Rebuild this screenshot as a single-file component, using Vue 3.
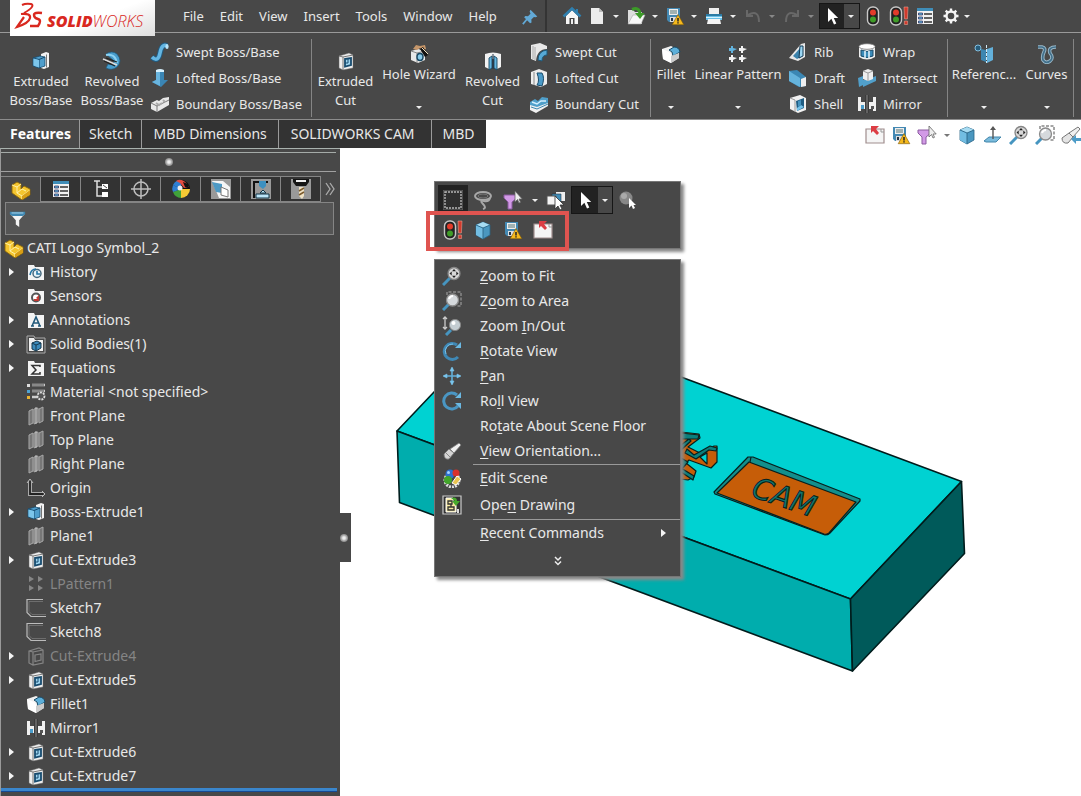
<script setup>
const menus = ['File', 'Edit', 'View', 'Insert', 'Tools', 'Window', 'Help']

const quick = [
  { icon: 'new', label: 'New' },
  { icon: 'open', label: 'Open' },
  { icon: 'save', label: 'Save' },
  { icon: 'print', label: 'Print' },
  { icon: 'undo', label: 'Undo', off: true },
  { icon: 'redo', label: 'Redo', off: true },
  { icon: 'cursor', label: 'Select', active: true }
]

const status = [
  { icon: 'traffic', label: 'Rebuild' },
  { icon: 'trafficbang', label: 'Rebuild all' },
  { icon: 'props', label: 'File properties' },
  { icon: 'gear', label: 'Options' }
]

const ribbon = [
  {
    items: [
      { kind: 'big', icon: 'extrude', lines: ['Extruded', 'Boss/Base'], size: 'w72' },
      { kind: 'big', icon: 'revolve', lines: ['Revolved', 'Boss/Base'], size: 'w70' },
      {
        kind: 'stack', size: 'w161', rows: [
          { icon: 'sweep', label: 'Swept Boss/Base' },
          { icon: 'loft', label: 'Lofted Boss/Base' },
          { icon: 'boundary', label: 'Boundary Boss/Base' }
        ]
      }
    ]
  },
  {
    items: [
      { kind: 'big', icon: 'cut', lines: ['Extruded', 'Cut'], size: 'w67' },
      { kind: 'drop', icon: 'hole', lines: ['Hole Wizard'], size: 'w80' },
      { kind: 'big', icon: 'revcut', lines: ['Revolved', 'Cut'], size: 'w67' },
      {
        kind: 'stack', size: 'w121', rows: [
          { icon: 'sweepcut', label: 'Swept Cut' },
          { icon: 'loftcut', label: 'Lofted Cut' },
          { icon: 'boundcut', label: 'Boundary Cut' }
        ]
      }
    ]
  },
  {
    items: [
      { kind: 'drop', icon: 'fillet', lines: ['Fillet'], size: 'w40' },
      { kind: 'drop', icon: 'pattern', lines: ['Linear Pattern'], size: 'w94' },
      {
        kind: 'stack', size: 'w66', rows: [
          { icon: 'rib', label: 'Rib' },
          { icon: 'draft', label: 'Draft' },
          { icon: 'shell', label: 'Shell' }
        ]
      },
      {
        kind: 'stack', size: 'w90', rows: [
          { icon: 'wrap', label: 'Wrap' },
          { icon: 'intersect', label: 'Intersect' },
          { icon: 'mirror', label: 'Mirror' }
        ]
      }
    ]
  },
  {
    items: [
      { kind: 'drop', icon: 'refgeo', lines: ['Referenc...'], size: 'w72' },
      { kind: 'drop', icon: 'curves', lines: ['Curves'], size: 'w53' }
    ]
  }
]

const tabs = ['Features', 'Sketch', 'MBD Dimensions', 'SOLIDWORKS CAM', 'MBD']

const headsUp = [
  { icon: 'exitbox', label: 'Previous view' },
  { icon: 'save', label: 'Save' },
  { icon: 'funnelpick', label: 'Selection filter', arrow: true },
  { icon: 'cube', label: 'Isometric' },
  { icon: 'normal', label: 'Normal to' },
  { icon: 'zoomfit', label: 'Zoom to fit' },
  { icon: 'zoomarea', label: 'Zoom to area' },
  { icon: 'torchback', label: 'View orientation' }
]

const panelTabs = ['part', 'props', 'config', 'target', 'ball', 'sheets', 'press', 'drill']

const tree = [
  { icon: 'fhistory', label: 'History', open: true },
  { icon: 'fsensor', label: 'Sensors' },
  { icon: 'fannot', label: 'Annotations', open: true },
  { icon: 'fsolid', label: 'Solid Bodies(1)', open: true },
  { icon: 'fequation', label: 'Equations', open: true },
  { icon: 'material', label: 'Material <not specified>' },
  { icon: 'plane', label: 'Front Plane' },
  { icon: 'plane', label: 'Top Plane' },
  { icon: 'plane', label: 'Right Plane' },
  { icon: 'origin', label: 'Origin' },
  { icon: 'extrude', label: 'Boss-Extrude1', open: true },
  { icon: 'plane', label: 'Plane1' },
  { icon: 'cut', label: 'Cut-Extrude3', open: true },
  { icon: 'patternoff', label: 'LPattern1', off: true },
  { icon: 'sketch', label: 'Sketch7' },
  { icon: 'sketch', label: 'Sketch8' },
  { icon: 'cutoff', label: 'Cut-Extrude4', open: true, off: true },
  { icon: 'cut', label: 'Cut-Extrude5', open: true },
  { icon: 'fillet', label: 'Fillet1' },
  { icon: 'mirror', label: 'Mirror1' },
  { icon: 'cut', label: 'Cut-Extrude6', open: true },
  { icon: 'cut', label: 'Cut-Extrude7', open: true }
]

const viewItems = [
  { icon: 'zoomfit', text: ['', 'Z', 'oom to Fit'] },
  { icon: 'zoomarea', text: ['Z', 'o', 'om to Area'] },
  { icon: 'zoominout', text: ['Zoom ', 'I', 'n/Out'] },
  { icon: 'rotate', text: ['', 'R', 'otate View'] },
  { icon: 'pan', text: ['', 'P', 'an'] },
  { icon: 'roll', text: ['Ro', 'l', 'l View'] },
  { icon: '', text: ['Ro', 't', 'ate About Scene Floor'] },
  { icon: 'torch', text: ['', 'V', 'iew Orientation...'] }
]
const sceneItems = [
  { icon: 'scene', text: ['', 'E', 'dit Scene'] },
  { icon: 'drawing', text: ['Ope', 'n', ' Drawing'] }
]
</script>

<template>
  <svg class="defs" aria-hidden="true">
    <symbol id="home" viewBox="0 0 20 20"><path d="M4 10v8h12v-8l-6-6z" fill="#f6f6f6"/><path d="M7.500 18v-6h5v6z" fill="#444"/><path d="M9 18v-5h2v5z" fill="#eee"/><path d="M1.500 10.500L10 2.500l8.500 8" fill="none" stroke="#2f7fae" stroke-width="2.600"/><path d="M14 3h2v4h-2z" fill="#2f7fae"/></symbol>
    <symbol id="new" viewBox="0 0 20 20"><path d="M4 2h8l4 4v12H4z" fill="#ececec"/><path d="M12 2v4h4z" fill="#bbb"/></symbol>
    <symbol id="open" viewBox="0 0 20 20"><path d="M2 4h5l2 2h7v12H2z" fill="#ddd"/><path d="M7 9h12l-4 9H2z" fill="#f8f8f8" stroke="#aaa" stroke-width=".6"/><path d="M6 3.500q7-3 8 4" fill="none" stroke="#3c9a28" stroke-width="3"/><path d="M9 7h9.500L14 13z" fill="#3c9a28"/></symbol>
    <symbol id="save" viewBox="0 0 20 20"><path d="M2 2h13v14H4l-2-2z" fill="#4489b3"/><path d="M4 3h9v6H4z" fill="#eee"/><path d="M5 5h7M5 7h7" stroke="#577"/><path d="M5 11h7v5H5z" fill="#ddd"/><path d="M6 12h2v3H6z" fill="#234"/><path d="M13 8.500l5.800 10.200H7.200z" fill="#f6b91c" stroke="#7a5708" stroke-width=".6"/><path d="M13 12v3.400M13 16.300v1.300" stroke="#222" stroke-width="1.500"/></symbol>
    <symbol id="print" viewBox="0 0 20 20"><path d="M5 2h10v6H5z" fill="#f0f0f0"/><path d="M2 8h16v6H2z" fill="#68bfe6"/><path d="M2 8h16v2H2z" fill="#2c7ba5"/><path d="M4 13h12l1 5H3z" fill="#f4f4f4"/><path d="M2 11.500h16" stroke="#d5f2ff"/></symbol>
    <symbol id="undo" viewBox="0 0 20 20"><path d="M4 4v6h6M5 9q11-6 11 7" fill="none" stroke="#686868" stroke-width="2"/></symbol>
    <symbol id="redo" viewBox="0 0 20 20"><path d="M16 4v6h-6M15 9q-11-6-11 7" fill="none" stroke="#686868" stroke-width="2"/></symbol>
    <symbol id="cursor" viewBox="0 0 20 20"><path d="M6 2v14l3.400-3.200L12 18.500l2.300-1L11.800 12h4.400z" fill="#fff"/></symbol>
    <symbol id="traffic" viewBox="0 0 20 20"><rect x="4.500" y="1" width="11" height="18" rx="5" fill="#222" stroke="#c8c8c8" stroke-width="1.400"/><circle cx="10" cy="6.500" r="3" fill="#e33b2a"/><circle cx="10" cy="13.500" r="3" fill="#3f9c28"/></symbol>
    <symbol id="trafficbang" viewBox="0 0 20 20"><rect x="1.500" y="1" width="11" height="18" rx="5" fill="#222" stroke="#c8c8c8" stroke-width="1.400"/><circle cx="7" cy="6.500" r="3" fill="#e33b2a"/><circle cx="7" cy="13.500" r="3" fill="#3f9c28"/><path d="M15 1h4l-.6 12h-2.800zM15.400 15h3.200v3.500h-3.200z" fill="#d23a2c" stroke="#f0b0a0" stroke-width=".5"/></symbol>
    <symbol id="props" viewBox="0 0 20 20"><path d="M2 2h16v16H2z" fill="#f2f2f2"/><path d="M2 2h16v3H2z" fill="#3f8db8"/><path d="M3.500 7h4v2h-4zM3.500 11h4v2h-4zM3.500 15h4v2h-4z" fill="#68b7e0" stroke="#225" stroke-width=".7"/><path d="M9 8h8M9 12h8M9 16h8" stroke="#333" stroke-width="1.300"/></symbol>
    <symbol id="gear" viewBox="0 0 20 20"><circle cx="10" cy="10" r="4.500" fill="none" stroke="#f5f5f5" stroke-width="2.400"/><path d="M10 2.500v3M10 14.500v3M2.500 10h3M14.500 10h3M4.700 4.700l2 2M13.300 13.300l2 2M15.300 4.700l-2 2M6.700 13.300l-2 2" stroke="#f5f5f5" stroke-width="2.400"/></symbol>
    <symbol id="pin" viewBox="0 0 20 20"><path d="M10 2l8 8-2 1-2-.5-3 3 .2 3.500-1.700 1-7-7L4 9.500l3 .2 3-3L9 4z" fill="#62a9d6"/><path d="M6 13l-5 6" stroke="#62a9d6" stroke-width="2"/></symbol>

    <symbol id="extrude" viewBox="0 0 20 20"><path d="M10 3l5-2 3 1v14l-5 2-3-1z" fill="#f2f2f2"/><path d="M15.500 3.500v13" stroke="#777"/><path d="M2 7l7-2 5 1v9l-6 2-6-2z" fill="#4f9ecc" stroke="#174b6e" stroke-width=".8"/><path d="M2 7l6 1.500L14 6M8 8.500V17" fill="none" stroke="#174b6e"/><path d="M2.500 7.500L8 9v7.500l-5.500-2z" fill="#7cc5ea"/></symbol>
    <symbol id="revolve" viewBox="0 0 20 20"><path d="M4 3q6-4 11 0q6 7 0 13q-5 4-11 1l2-4q6 2 6-3z" fill="#489dcd" stroke="#1e597c" stroke-width=".7"/><path d="M4 4q9-2 11 8" fill="none" stroke="#8cd2f2" stroke-width="2"/><path d="M1 8l14 6" stroke="#ddd" stroke-width="1.500"/><path d="M2 10l11 5M4 7l11 4" stroke="#222" stroke-width="1.300"/></symbol>
    <symbol id="sweep" viewBox="0 0 20 20"><path d="M2 15q6 6 8-4t7-7" fill="none" stroke="#225b80" stroke-width="5.500"/><path d="M2 15q6 6 8-4t7-7" fill="none" stroke="#65b6e2" stroke-width="3.600"/><ellipse cx="17" cy="4.500" rx="1.600" ry="2.500" fill="#b8e5fb"/></symbol>
    <symbol id="loft" viewBox="0 0 20 20"><path d="M6 2h8v10h4l-7 7-9-5 4-2z" fill="#3a85b4"/><path d="M6 2h4v16l-8-4 4-2z" fill="#69b5df"/><path d="M6 2q4-2 8 0v2H6z" fill="#d8f2ff"/></symbol>
    <symbol id="boundary" viewBox="0 0 20 20"><path d="M1 9l6-3 2 1 4-3 6-1v8L7 18l-6-3z" fill="#e8e8e8"/><path d="M1 9l6 3 12-6M7 12v6" stroke="#777" fill="none"/><path d="M6 9l3 2 3-2M13 6l2 2" stroke="#aaa" stroke-width="2" fill="none"/></symbol>
    <symbol id="cut" viewBox="0 0 20 20"><path d="M3 5l10-3 4 2v13L7 19l-4-2z" fill="#efefef" stroke="#666" stroke-width=".5"/><path d="M3 5l4 1 10-2M7 6v13" fill="none" stroke="#777"/><path d="M9 8l6-1v7l-6 1.500z" fill="#9ed5f0" stroke="#174b6e" stroke-width="1.800"/><path d="M9 12h3V8" stroke="#174b6e" fill="none"/></symbol>
    <symbol id="cutoff" viewBox="0 0 20 20"><path d="M3 5l10-3 4 2v13L7 19l-4-2zM3 5l4 1 10-2M7 6v13M9 9l6-1v6l-6 1.500z" fill="none" stroke="#868686" stroke-width="1.200"/></symbol>
    <symbol id="hole" viewBox="0 0 20 20"><path d="M2 7l7-2 7 2v9l-7 3-7-3z" fill="#e9e9e9"/><path d="M2 7l6 2 8-2M8 9v10" stroke="#888" fill="none"/><ellipse cx="11" cy="13" rx="3" ry="3.500" fill="#8acbea" stroke="#1b4a66" stroke-width="1.500"/><path d="M4 5l3-4 4 1 5-1 1 4-3 1-3-2-3 2z" fill="#c5966a"/><path d="M11 5l3-2 5 8-3 2z" fill="#111"/><path d="M13 4l6 6" stroke="#f0e0c0"/></symbol>
    <symbol id="revcut" viewBox="0 0 20 20"><path d="M2 3q8-3 16 0v13l-4 2V8H6v10l-4-2z" fill="#f2f2f2"/><path d="M6 7l3-2v12l-3 2zM14 7l-3-2v12l3 2z" fill="#66b5df" stroke="#164763" stroke-width=".9"/><path d="M10 3v15" stroke="#234"/></symbol>
    <symbol id="sweepcut" viewBox="0 0 20 20"><path d="M2 3l9-2 7 3v3Q8 7 7 19l-5-2z" fill="#e9e9e9"/><path d="M9 18Q9 9 18 8v5q-5 0-5 6z" fill="#57a9d6" stroke="#1c5879"/><path d="M4 4v13M6 5v13" stroke="#aaa"/></symbol>
    <symbol id="loftcut" viewBox="0 0 20 20"><path d="M2 4l8-3 8 3v12l-6 3-10-3z" fill="#ededed"/><path d="M8 5q3 8 0 12l5 1q3-8 0-13z" fill="#4b9bc9" stroke="#184a69"/><path d="M5 4v13" stroke="#888"/></symbol>
    <symbol id="boundcut" viewBox="0 0 20 20"><path d="M1 11l18-4v5L7 19l-6-3z" fill="#f0f0f0"/><path d="M1 8l5-3 3 2 4-4 6 1v5L8 13l-7-2z" fill="#4f9fca"/><path d="M3 8l5 2 4-3 5 0" stroke="#d3f0ff" stroke-width="1.500" fill="none"/><path d="M2 13l6 2 11-5" stroke="#3c88b1" fill="none"/></symbol>
    <symbol id="fillet" viewBox="0 0 20 20"><path d="M1 5l9-3 8 4v8l-8 5-8-4z" fill="#f0f0f0"/><path d="M1 5l7 3q3 1 2 11l-8-4z" fill="#fff"/><path d="M8 6l5-3q5 0 6 5l-7 4q0-5-4-6z" fill="#5dafd9" stroke="#164966"/><path d="M10 12v7l8-5V9z" fill="#ccc"/></symbol>
    <symbol id="pattern" viewBox="0 0 20 20"><path d="M3 2h2v2l4 1-4 2v2H3z" fill="#62b3de"/><path d="M13 2h2v2l4 1-4 2v2h-2zM3 11h2v2l4 1-4 2v2H3zM13 11h2v2l4 1-4 2v2h-2zM11 4h2v3h-2zM11 13h2v3h-2zM1 13h2v3H1z" fill="#f2f2f2"/><path d="M1 4h2v3H1z" fill="#62b3de"/></symbol>
    <symbol id="patternoff" viewBox="0 0 20 20"><path d="M3 2l5 3-5 3zM12 2l5 3-5 3zM3 11l5 3-5 3zM12 11l5 3-5 3z" fill="#868686"/></symbol>
    <symbol id="rib" viewBox="0 0 20 20"><path d="M1 16L13 2l4-1v14l-7 4z" fill="#e8e8e8"/><path d="M5 14l8-9v10l-4 2z" fill="#3b83ad"/><path d="M12 4h3v10l-4 2z" fill="#9bd7f4" stroke="#123a55"/></symbol>
    <symbol id="draft" viewBox="0 0 20 20"><path d="M1 3l8-1 9 7v9l-7 1-10-6z" fill="#3b87b4"/><path d="M1 3l11 7v9L1 13z" fill="#65b3dc"/><path d="M13 11l5-2v9l-5 1z" fill="#eee"/></symbol>
    <symbol id="shell" viewBox="0 0 20 20"><path d="M2 4l10-3 6 3v12l-8 3-8-4z" fill="#f1f1f1"/><path d="M2 4l5 2v12" fill="none" stroke="#999"/><path d="M8 7l8-3v10l-7 3z" fill="#1f5d83"/><path d="M9 14l4-3 3 2-7 4z" fill="#76c4ec"/><path d="M10 7l3-1v5l-3 2z" fill="#4593bf"/></symbol>
    <symbol id="wrap" viewBox="0 0 20 20"><path d="M2 4v11q8 5 16 0V4z" fill="#eee"/><ellipse cx="10" cy="4.500" rx="8" ry="2.800" fill="#fff" stroke="#777" stroke-width=".8"/><path d="M4 8q6 3 12 0v6q-6 3-12 0z" fill="#3a8ab8" stroke="#184b6a"/><path d="M8 9v7M12 9v7" stroke="#e7f7ff" stroke-width="1.500"/></symbol>
    <symbol id="intersect" viewBox="0 0 20 20"><path d="M1 10l5-2v9l-4 2zM6 12l8-2 5-2v5L6 19z" fill="#519fca"/><path d="M6 3l5-2 5 2v8l-5 2-5-2z" fill="#eee"/><path d="M6 3l5 2 5-2M11 5v8" stroke="#999" fill="none"/></symbol>
    <symbol id="mirror" viewBox="0 0 20 20"><path d="M1 3h3v5h4v7H4v2H1z" fill="#f0f0f0"/><path d="M4 11h3v4H4z" fill="#4b9dcb"/><path d="M19 3h-3v5h-4v7h4v2h3z" fill="#f0f0f0"/><path d="M14 12h3v3h-3z" fill="#555"/><path d="M10 1v18" stroke="#111" stroke-width="2.400"/><path d="M10 1v18" stroke="#ddd" stroke-width=".8"/></symbol>
    <symbol id="refgeo" viewBox="0 0 20 20"><circle cx="4" cy="4" r="3" fill="#265c7b" stroke="#82bfe0"/><path d="M7 5l5 1v12l-5-2z" fill="#3d86b0"/><path d="M13 5l6-2v13l-6 3z" fill="#63b0da"/><path d="M12.500 1v18" stroke="#d0e9f5" stroke-dasharray="3 1"/></symbol>
    <symbol id="curves" viewBox="0 0 20 20"><path d="M1 3h4q4 1 2 5t-1 8q3 4 7 1t0-8q-2-6 6-6" fill="none" stroke="#9ab9ca" stroke-width="3.600"/><path d="M1 3h4q4 1 2 5t-1 8q3 4 7 1t0-8q-2-6 6-6" fill="none" stroke="#416f8a" stroke-width="1.700"/></symbol>

    <symbol id="exitbox" viewBox="0 0 20 20"><path d="M1 4h18v14H1z" fill="#f5f5f5" stroke="#a08e8e" stroke-width="1.200"/><path d="M16 4v3h3" fill="none" stroke="#999"/><path d="M6 1h8l-3 3 3 4-2 2-4-4-2 2z" fill="#dc3d44"/></symbol>
    <symbol id="funnelpick" viewBox="0 0 20 20"><path d="M1 5h13v3l-5 4v7H5v-7L1 8z" fill="#d29ae6" stroke="#8b5ba0"/><path d="M12 1v11l2.500-2.500L16 13l1.500-.7L16 9h3.200z" fill="#eee" stroke="#666" stroke-width=".8"/></symbol>
    <symbol id="cube" viewBox="0 0 20 20"><path d="M10 2l7 3v10l-7 4-7-4V5z" fill="#4a97c0" stroke="#2a6587" stroke-width=".8"/><path d="M10 2l7 3-7 3-7-3z" fill="#a8dcf2"/><path d="M3 5l7 3v11l-7-4z" fill="#72bde2"/><path d="M3 5l7 3 7-3M10 8v11" stroke="#2a6587" fill="none" stroke-width=".9"/></symbol>
    <symbol id="normal" viewBox="0 0 20 20"><path d="M1 16l5-4h12l-5 5H3z" fill="#7abbdc" stroke="#4386ab"/><path d="M10 14V3" stroke="#555" stroke-width="1.400"/><path d="M7 5l3-4 3 4z" fill="#555"/></symbol>
    <symbol id="zoomfit" viewBox="0 0 20 20"><path d="M1 19l7-7" stroke="#4695c0" stroke-width="3"/><circle cx="12" cy="7.500" r="6" fill="#d8d8d8" stroke="#858585" stroke-width="1.300"/><path d="M12 3l2 2.200h-4zM12 12l2-2.200h-4zM7.500 7.500l2.200-2v4zM16.500 7.500l-2.200-2v4z" fill="#222"/></symbol>
    <symbol id="zoomarea" viewBox="0 0 20 20"><path d="M5 4V1h14v14h-5" fill="none" stroke="#888" stroke-width="1.500" stroke-dasharray="3 1.500"/><path d="M1 19l6-6" stroke="#4695c0" stroke-width="3"/><circle cx="10.500" cy="9" r="6" fill="#d5d9dc" stroke="#8b8b8b" stroke-width="1.300"/><path d="M7 8q1-3 4-3" stroke="#fff" stroke-width="2" fill="none"/></symbol>
    <symbol id="zoominout" viewBox="0 0 20 20"><path d="M3 1v12M1 3l2-2 2 2M1 11l2 2 2-2" fill="none" stroke="#ccc" stroke-width="1.300"/><path d="M4 19l5-5" stroke="#4695c0" stroke-width="3"/><circle cx="13" cy="9" r="5.600" fill="#c4cdd2" stroke="#858585"/><circle cx="11.500" cy="7" r="2" fill="#fff"/></symbol>
    <symbol id="rotate" viewBox="0 0 20 20"><path d="M16 16a8 8 0 1 1-1-12" fill="none" stroke="#3f88b5" stroke-width="3"/><path d="M13 7h6V1z" fill="#6bb9e3"/><path d="M4 13a7 7 0 0 1 7-10" fill="none" stroke="#79c3eb"/></symbol>
    <symbol id="roll" viewBox="0 0 20 20"><path d="M16 15a8 8 0 1 1-1-11" fill="none" stroke="#4a96c3" stroke-width="3"/><path d="M13 7h6V1zM13 12h6v6z" fill="#6bb9e3"/></symbol>
    <symbol id="pan" viewBox="0 0 20 20"><path d="M10 2v16M2 10h16" stroke="#62afd9" stroke-width="1.600"/><path d="M8 5l2-4 2 4zM8 15l2 4 2-4zM5 8l-4 2 4 2zM15 8l4 2-4 2z" fill="#7ac5ec" stroke="#7ac5ec" stroke-width=".6"/></symbol>
    <symbol id="torch" viewBox="0 0 20 20"><path d="M2 13l5-5 5 4-5 6q-5 1-5-5z" fill="#d4d4d4" stroke="#777" stroke-width=".8"/><path d="M8 8l9-6 2 2-7 8z" fill="#f0f0f0" stroke="#777" stroke-width=".8"/><path d="M4 12l4 4" stroke="#888"/></symbol>
    <symbol id="torchback" viewBox="0 0 20 20"><path d="M1 13l7-5 4 4-5 6q-6 1-6-5z" fill="#e4e4e4" stroke="#777"/><path d="M8 8l9-6 2 2-7 8z" fill="#f0f0f0" stroke="#777"/><path d="M10 14l5-4v3h5v3h-5v3z" fill="#4d9cc8"/></symbol>
    <symbol id="scene" viewBox="0 0 20 20"><circle cx="10" cy="12" r="7" fill="none" stroke="#ddd" stroke-width="3" stroke-dasharray="2 1"/><circle cx="8" cy="6" r="4.500" fill="#2d70d0"/><circle cx="6.500" cy="4.500" r="1.500" fill="#a6d2ff"/><circle cx="14" cy="5" r="3.500" fill="#d8302c"/><circle cx="6" cy="12" r="4" fill="#42a52b"/><path d="M10 15l5-7 4 3-5 6z" fill="#eac450" stroke="#fff"/></symbol>
    <symbol id="drawing" viewBox="0 0 20 20"><path d="M1 1h18v18H1z" fill="#333" stroke="#ccc" stroke-width="1.200"/><path d="M4 3h7v4h3v10H4z" fill="#f7e9a0" stroke="#fff"/><path d="M6 6h4v3H6zM6 12h6v3H6zM9 9v3" stroke="#333" stroke-width="1.300" fill="none"/><path d="M16 14v4" stroke="#ddd" stroke-width="2"/><path d="M9 3q6-2 6 3h3l-4 5-4-5h3" fill="#46a92d"/></symbol>

    <symbol id="part" viewBox="0 0 20 20"><path d="M1 5l5-3 4 2v5l3-3 6 3v6l-8 5L1 13z" fill="#f4c52f" stroke="#8a6509" stroke-width=".9"/><path d="M1 5l5 2 4-3M6 7v6l5 3 8-6M6 13l5-4 4 2M11 16v3" fill="none" stroke="#fff1a8"/><path d="M11 16v3.500l8-5V10z" fill="#d89e15"/></symbol>
    <symbol id="config" viewBox="0 0 20 20"><path d="M3 2h6M6 2v15h5M6 8h5" fill="none" stroke="#ddd" stroke-width="1.500"/><path d="M11 5h6v5h-6zM11 13h6v5h-6z" fill="#fff"/><path d="M12 6l4 3" stroke="#444"/></symbol>
    <symbol id="target" viewBox="0 0 20 20"><circle cx="10" cy="10" r="7" fill="none" stroke="#bdbdbd" stroke-width="1.500"/><path d="M10 0v20M0 10h20" stroke="#bdbdbd" stroke-width="1.500"/></symbol>
    <symbol id="ball" viewBox="0 0 20 20"><path d="M10 10L2 6a9 9 0 0 1 9-5z" fill="#2f7fd3"/><path d="M10 10l1-9a9 9 0 0 1 8 9z" fill="#111"/><path d="M10 10h9a9 9 0 0 1-9 9z" fill="#f6ca35"/><path d="M10 10v9a9 9 0 0 1-8-6z" fill="#40a13a"/><path d="M10 10l-8 3a9 9 0 0 1 0-7z" fill="#2f7fd3"/><path d="M5 2q7-4 13 6l-5 1-4-5z" fill="#e44d40"/><path d="M12 3l5 2 1 4-4-1z" fill="#111"/><circle cx="9" cy="9" r="2.500" fill="#eee"/></symbol>
    <symbol id="sheets" viewBox="0 0 20 20"><path d="M0 0h20v20H0z" fill="#999"/><path d="M1 2h11l7 6v11H8z" fill="#f5f5f5"/><path d="M1 3l10 2v9L5 13z" fill="#4c99c5"/><path d="M10 8l7 3v7l-7-2z" fill="#fff" stroke="#777"/></symbol>
    <symbol id="press" viewBox="0 0 20 20"><path d="M0 0h20v20H0z" fill="#999"/><path d="M3 19V3h14" fill="none" stroke="#111" stroke-width="2"/><path d="M8 2h7v5l-3 3-4-3z" fill="#3d90c0"/><path d="M9 14l3-3 3 3zM5 15h13v4H5z" fill="#bce5f8" stroke="#134"/></symbol>
    <symbol id="drill" viewBox="0 0 20 20"><path d="M0 0h20v20H0z" fill="#999"/><path d="M2 0h16v3l-3 4H5L2 3z" fill="#151515"/><path d="M5 2h10" stroke="#eee" stroke-width="2"/><path d="M8 8h5v9l-2 3-3-3z" fill="#f0e3c6"/><path d="M8 12l5-3M8 16l5-3" stroke="#7b5a2c" stroke-width="1.500"/></symbol>
    <symbol id="funnel" viewBox="0 0 20 20"><path d="M1 4h18l-7 8v8l-4-3v-5z" fill="#f4f4f4"/><path d="M1 2h18v3l-3 2H4L1 5z" fill="#3d86b0"/><path d="M3 3.500h14" stroke="#bfe5f8"/></symbol>

    <symbol id="fhistory" viewBox="0 0 20 20"><path d="M2 3h6l1 2h9v13H2z" fill="#f3f3f3"/><circle cx="11" cy="11.500" r="4" fill="#e8f4fb" stroke="#46697e" stroke-width="1.500"/><path d="M11 9v3h3M4 13q1-6 6-6" fill="none" stroke="#2576a5" stroke-width="1.600"/></symbol>
    <symbol id="fsensor" viewBox="0 0 20 20"><path d="M2 3h6l1 2h9v13H2z" fill="#f3f3f3"/><circle cx="10" cy="11.500" r="4" fill="#fff" stroke="#555" stroke-width="2"/><path d="M10 12l3-3v5z" fill="#c33a34"/><path d="M8 14h5" stroke="#c33a34" stroke-width="2"/></symbol>
    <symbol id="fannot" viewBox="0 0 20 20"><path d="M2 3h6l1 2h9v13H2z" fill="#f3f3f3"/><path d="M6 16l4-9 4 9M7 13h6M5 16h3M12 16h3" fill="none" stroke="#22597a" stroke-width="1.600"/></symbol>
    <symbol id="fsolid" viewBox="0 0 20 20"><path d="M1 2h7l1 2h10v15H1z" fill="#484848" stroke="#aaa"/><path d="M3 4h5l1 2h8v11H3z" fill="#f0f0f0"/><path d="M6 9l5-2 4 2v5l-5 3-4-2z" fill="#3b8abb" stroke="#16384d"/><path d="M6 9l4 2 5-2M10 11v6" stroke="#16384d" fill="none"/></symbol>
    <symbol id="fequation" viewBox="0 0 20 20"><path d="M2 3h6l1 2h9v13H2z" fill="#f3f3f3"/><path d="M14 9V7.500H6l4 4.500-4 4h8V14" fill="none" stroke="#333" stroke-width="1.500"/></symbol>
    <symbol id="material" viewBox="0 0 20 20"><path d="M1 2h3v3H1z" fill="#ddd"/><path d="M1 8h3v3H1z" fill="#4ea3d3"/><path d="M1 14h3v3H1z" fill="#eab431"/><path d="M6 3h13M6 9h13M6 15h6" stroke="#ccc" stroke-width="2.400"/><path d="M6 3h12M6 9h12" stroke="#444"/><circle cx="15" cy="14" r="3.500" fill="#555" stroke="#ddd" stroke-width="1.800" stroke-dasharray="2 1"/></symbol>
    <symbol id="plane" viewBox="0 0 20 20"><path d="M3 5l4-2v14l-4 2zM8 3l4-1v14l-4 2zM13 3l4-2v14l-4 2z" fill="#777" stroke="#a8a8a8"/><path d="M10 1v17" stroke="#ccc"/></symbol>
    <symbol id="origin" viewBox="0 0 20 20"><path d="M4 3v13h13" fill="none" stroke="#aaa" stroke-width="4"/><path d="M4 3v13h13" fill="none" stroke="#222" stroke-width="1.800"/><path d="M1 5l3-4 3 4M16 13l3 3-3 3" fill="none" stroke="#bbb"/></symbol>
    <symbol id="sketch" viewBox="0 0 20 20"><path d="M17 1.500H1v13l4 4h15" fill="none" stroke="#bbb" stroke-width="1.200"/><path d="M17 3.500H3v10l3 3h14" fill="none" stroke="#777" stroke-width=".8"/></symbol>
    <symbol id="box" viewBox="0 0 20 20"><path d="M0 0h20v20H0z" fill="#333" stroke="#666"/><path d="M2 2h16v16H2z" fill="#303030" stroke="#b5b5b5" stroke-width="1.400" stroke-dasharray="2 1"/></symbol>
    <symbol id="lasso" viewBox="0 0 20 20"><ellipse cx="10" cy="6" rx="8" ry="4" fill="none" stroke="#a8a8a8" stroke-width="2"/><ellipse cx="10" cy="6" rx="5" ry="2" fill="none" stroke="#777"/><path d="M17 8q-1 4-6 3t-1 3 0 5" fill="none" stroke="#a8a8a8" stroke-width="2"/></symbol>
    <symbol id="layers" viewBox="0 0 20 20"><path d="M10 2h9v9h-9z" fill="#eee"/><path d="M6 4h9v9H6z" fill="#3f8db8" stroke="#234" stroke-width=".6"/><path d="M1 6h9v9H1z" fill="#f4f4f4" stroke="#555"/><path d="M9 6v13l3-3 2 4 2-1-2-4h4z" fill="#fff" stroke="#333" stroke-width=".8"/></symbol>
    <symbol id="lens" viewBox="0 0 20 20"><circle cx="8" cy="8" r="6.500" fill="#888"/><circle cx="6" cy="6" r="3" fill="#aaa"/><path d="M11 8v10l2.500-2.500L15 19l2-1-1.500-3H18z" fill="#fff"/></symbol>
  </svg>

  <div class="app">
    <header class="titlebar">
      <div class="brand">
        <svg class="mark" viewBox="0 0 28 28" aria-hidden="true"><path d="M7 1q4-2 9-1 5 2-7 9" fill="none" stroke="#d9281f" stroke-width="2"/><path d="M6 10q10-1 9 4t-13 9l7-10" fill="none" stroke="#d9281f" stroke-width="2.200"/><path d="M27 9q-8-1-8 2t4 4 0 7h-8" fill="none" stroke="#d9281f" stroke-width="2.400"/></svg>
        <span class="word"><b>SOLID</b>WORKS</span>
      </div>
      <nav class="menus">
        <button v-for="m in menus" :key="m" type="button">{{ m }}</button>
      </nav>
      <button class="pin" type="button" aria-label="Keep menu visible"><svg class="ic small"><use href="#pin" /></svg></button>
      <div class="quick">
        <button class="solo" type="button" aria-label="Home"><svg class="ic"><use href="#home" /></svg></button>
        <button v-for="q in quick" :key="q.icon" type="button" class="split" :class="{ active: q.active, off: q.off }" :aria-label="q.label">
          <span class="face"><svg class="ic"><use :href="'#' + q.icon" /></svg></span>
          <span class="more"><i class="down"></i></span>
        </button>
        <button v-for="s in status" :key="s.icon" class="solo" type="button" :aria-label="s.label"><svg class="ic"><use :href="'#' + s.icon" /></svg></button>
        <i class="down"></i>
      </div>
    </header>

    <section class="ribbon">
      <div v-for="(g, gi) in ribbon" :key="gi" class="group">
        <template v-for="(it, ii) in g.items" :key="ii">
          <div v-if="it.kind === 'stack'" class="stack" :class="it.size">
            <button v-for="r in it.rows" :key="r.label" type="button"><svg class="ic"><use :href="'#' + r.icon" /></svg>{{ r.label }}</button>
          </div>
          <button v-else type="button" class="big" :class="[it.size, it.kind]">
            <svg class="ic"><use :href="'#' + it.icon" /></svg>
            <span v-for="l in it.lines" :key="l" class="line">{{ l }}</span>
            <i v-if="it.kind === 'drop'" class="down"></i>
          </button>
        </template>
      </div>
    </section>

    <div class="tabrow">
      <nav class="tabs">
        <button v-for="(t, i) in tabs" :key="t" type="button" :class="{ current: i === 0 }">{{ t }}</button>
      </nav>
      <div class="headsup">
        <template v-for="h in headsUp" :key="h.label">
          <button class="solo" type="button" :aria-label="h.label"><svg class="ic"><use :href="'#' + h.icon" /></svg></button>
          <i v-if="h.arrow" class="down"></i>
        </template>
      </div>
    </div>

    <main class="body">
      <aside class="panel">
        <div class="grip"><i class="dot"></i></div>
        <div class="ptabs">
          <button v-for="(p, i) in panelTabs" :key="p" type="button" :class="{ current: i === 0 }" :aria-label="p"><svg class="ic"><use :href="'#' + p" /></svg></button>
          <button class="next" type="button" aria-label="More tabs"><svg viewBox="0 0 10 14"><path d="M1 1l4 6-4 6M5 1l4 6-4 6" fill="none" stroke="#aaa" stroke-width="1.300" /></svg></button>
        </div>
        <label class="filter"><svg class="ic small"><use href="#funnel" /></svg><input type="text" aria-label="Filter tree" /></label>
        <div class="root"><svg class="ic"><use href="#part" /></svg>CATI Logo Symbol_2</div>
        <ul class="tree">
          <li v-for="n in tree" :key="n.label" :class="{ off: n.off }">
            <span class="twist"><i v-if="n.open" class="right"></i></span>
            <svg class="ic"><use :href="'#' + n.icon" /></svg>
            <span>{{ n.label }}</span>
          </li>
        </ul>
        <div class="rollback"></div>
        <button class="flyout" type="button" aria-label="Collapse panel"><i class="dot"></i></button>
      </aside>

      <section class="view">
        <svg class="model" viewBox="340 148 741 648" role="img" aria-label="Model">
          <g stroke="#001c1c" stroke-width="1.600" stroke-linejoin="round">
            <path d="M397 431L509 313 961.500 481.500 850.500 599z" fill="#00d2d2" />
            <path d="M397 431L850.500 599l2 72L399.500 502.500z" fill="#00adad" />
            <path d="M850.500 599l111-117.500 3 72-112 117.500z" fill="#005a5a" />
          </g>
          <g stroke="#06201e" stroke-width="1.200" stroke-linejoin="round">
            <path d="M748 457l5 0 107 42v2L830 533q-2 2-5 2L715 494l-1-2z" fill="#138f8c" />
            <path d="M749 462l107 40-27 31q-2 2-5 1L717 493z" fill="#c65d08" />
            <path d="M751 457l-1 5" fill="none" />
            <path d="M681 432l18 2 1 4-8 6-4 3 18 9v-5l8-5 3 0v16l-6 6-22-8-3 3 10 8-2 6-6 3-8-1z" fill="#c65d08" />
            <path d="M681 433l18 2-1 4-17 0zM681 445l8-6 2 2-10 9zM687 449l7 6 16-9 7 2-1 3-7-1-13 9-11-6zM681 458l7 4-7 8zM681 468l13 8-1 4-12-8z" fill="#0b7f7c" />
            <path d="M700 457l7-4v11z" fill="#00d2d2" />
          </g>
          <text class="engrave" x="750" y="496" transform="rotate(19 750 496)">CAM</text>
        </svg>

        <div class="floatbar">
          <div class="frow">
            <button class="cell pressed" type="button" aria-label="Box selection"><svg class="ic"><use href="#box" /></svg></button>
            <button class="cell" type="button" aria-label="Lasso selection"><svg class="ic"><use href="#lasso" /></svg></button>
            <button class="cell" type="button" aria-label="Selection filters"><svg class="ic"><use href="#funnelpick" /></svg></button>
            <i class="down"></i>
            <button class="cell wide" type="button" aria-label="Select other"><svg class="ic"><use href="#layers" /></svg></button>
            <button class="split active" type="button" aria-label="Select"><span class="face"><svg class="ic"><use href="#cursor" /></svg></span><span class="more"><i class="down"></i></span></button>
            <button class="cell" type="button" aria-label="Magnified selection"><svg class="ic"><use href="#lens" /></svg></button>
          </div>
          <div class="frow">
            <button class="cell" type="button" aria-label="Rebuild"><svg class="ic"><use href="#trafficbang" /></svg></button>
            <button class="cell" type="button" aria-label="Isometric"><svg class="ic"><use href="#cube" /></svg></button>
            <button class="cell" type="button" aria-label="Save"><svg class="ic"><use href="#save" /></svg></button>
            <button class="cell" type="button" aria-label="Previous view"><svg class="ic"><use href="#exitbox" /></svg></button>
          </div>
        </div>
        <div class="callout"></div>

        <div class="menu">
          <button v-for="(m, i) in viewItems" :key="i" class="item" type="button">
            <svg class="ic"><use v-if="m.icon" :href="'#' + m.icon" /></svg><span>{{ m.text[0] }}<u>{{ m.text[1] }}</u>{{ m.text[2] }}</span>
          </button>
          <hr />
          <button v-for="(m, i) in sceneItems" :key="'s' + i" class="item tall" type="button">
            <svg class="ic"><use :href="'#' + m.icon" /></svg><span>{{ m.text[0] }}<u>{{ m.text[1] }}</u>{{ m.text[2] }}</span>
          </button>
          <hr />
          <button class="item tall" type="button"><svg class="ic"></svg><span><u>R</u>ecent Commands</span><i class="right"></i></button>
          <button class="expand" type="button" aria-label="Show all commands"><svg viewBox="0 0 8 10"><path d="M1 1l3 3 3-3M1 5.500l3 3 3-3" fill="none" stroke="#eee" stroke-width="1.500" /></svg></button>
        </div>
      </section>
    </main>
  </div>
</template>

<style>
body { background: #fff; }
</style>

<style scoped>
.defs { position: absolute; width: 0; height: 0; }
.app {
  display: flex;
  flex-direction: column;
  min-height: 100vh;
  overflow: hidden;
  background: #fff;
  color: #e8e8e8;
  font-family: "Noto Sans", "Open Sans", sans-serif;
  font-size: 14px;
  line-height: 20px;
}
button {
  margin: 0;
  padding: 0;
  border: 0;
  background: none;
  color: inherit;
  font: inherit;
  white-space: nowrap;
}
.ic { display: block; flex: none; width: 20px; height: 20px; }
.ic.small { width: 17px; height: 17px; }
.down {
  flex: none;
  width: 0;
  height: 0;
  border: 3px solid transparent;
  border-top-color: #eee;
  border-bottom: 0;
}
.right {
  flex: none;
  width: 0;
  height: 0;
  border: 4px solid transparent;
  border-left: 5px solid #f4f4f4;
  border-right: 0;
}
.dot {
  width: 8px;
  height: 8px;
  border-radius: 50%;
  background: radial-gradient(#eee 20%, #aaa 50%, #555);
}

.titlebar {
  display: flex;
  align-items: center;
  height: 32px;
  background: #484848;
  border-bottom: 1px solid #9a9a9a;
  font-size: 13px;
}
.brand {
  position: relative;
  z-index: 2;
  display: flex;
  align-items: center;
  align-self: flex-start;
  flex: none;
  box-sizing: border-box;
  width: 145px;
  height: 36px;
  margin-left: 10px;
  padding-left: 5px;
  background: linear-gradient(160deg, #fff 55%, #dedede);
  color: #d9281f;
}
.mark { flex: none; width: 28px; height: 28px; overflow: visible; }
.word { padding: 6px 0 0 4px; font: italic 300 16px/20px "Open Sans", sans-serif; }
.word b { font-weight: 800; }
.menus { display: flex; gap: 16px; margin-left: 28px; }
.pin { margin-left: 25px; }
.quick {
  display: flex;
  align-items: center;
  height: 32px;
  margin-left: 6px;
  padding-left: 12px;
  border-left: 2px solid #343434;
}
.solo { display: flex; justify-content: center; flex: none; width: 26px; }
.split { display: flex; align-items: center; flex: none; height: 26px; }
.split .face { display: flex; align-items: center; justify-content: center; width: 24px; height: 100%; }
.split .more { display: flex; align-items: center; justify-content: center; width: 15px; height: 100%; }
.split.off .down { border-top-color: #888; }
.split.active { border: 1px solid #161616; }
.split.active .face { background: #222; }

.ribbon { display: flex; height: 86px; padding-left: 5px; background: #484848; border-bottom: 1px solid #8c8c8c; font-size: 13px; }
.group { display: flex; position: relative; flex: none; margin-right: 1px; }
.group::after { content: ""; position: absolute; right: -1px; top: 6px; bottom: 2px; width: 1px; background: #858585; }
.big { display: flex; flex-direction: column; align-items: center; flex: none; }
.big.big { padding-top: 18px; }
.big.drop { padding-top: 11px; }
.big .line { line-height: 19px; }
.big .ic + .line { margin-top: 1px; }
.big.drop .down { margin-top: 22px; }
.stack { display: flex; flex-direction: column; flex: none; padding: 6px 0 0 3px; }
.stack button { display: flex; align-items: center; gap: 6px; height: 26px; }
.w40 { width: 40px; }
.w53 { width: 53px; }
.w66 { width: 66px; }
.w67 { width: 67px; }
.w70 { width: 70px; }
.w72 { width: 72px; }
.w80 { width: 80px; }
.w90 { width: 90px; }
.w94 { width: 94px; }
.w121 { width: 121px; }
.w161 { width: 161px; }

.tabrow { display: flex; justify-content: space-between; height: 28px; }
.tabs { display: flex; }
.tabs button { padding: 0 11px; background: #333; border-left: 1px solid #9a9a9a; }
.tabs button:nth-child(2) { padding: 0 9px; }
.tabs button:nth-child(4) { padding: 0 16px 0 12px; }
.tabs .current { padding: 0 8px 0 10px; background: #484848; border-left: 0; color: #fff; font-weight: 700; }
.headsup { display: flex; align-items: center; margin-right: -3px; padding-top: 2px; }
.headsup .down { margin: 0 4px; border-top-color: #777; }

.body { display: flex; flex: 1; }
.panel {
  position: relative;
  z-index: 1;
  box-sizing: border-box;
  display: flex;
  flex-direction: column;
  flex: none;
  width: 340px;
  background: #484848;
  border-top: 1px solid #a9b2ae;
  border-left: 1px solid #999;
}
.grip {
  display: flex;
  align-items: center;
  justify-content: center;
  height: 18px;
  margin: 3px 4px 4px 0;
  border-top: 1px solid #a5aba8;
  border-bottom: 1px solid #a0a0a0;
}
.ptabs { display: flex; height: 26px; }
.ptabs button {
  display: flex;
  align-items: center;
  justify-content: center;
  flex: none;
  box-sizing: border-box;
  width: 40px;
  background: #333;
  border: 1px solid #858585;
  border-left: 0;
}
.ptabs .current { background: #484848; border-bottom: 0; }
.ptabs .next { width: 18px; background: none; border: 0; }
.next svg { width: 10px; height: 14px; }
.filter {
  display: flex;
  align-items: center;
  height: 31px;
  margin: 0 6px 1px 4px;
  padding-left: 3px;
  background: #555;
  border: 1px solid #858585;
}
.filter input { flex: 1; min-width: 0; height: 24px; padding: 0 6px; border: 0; outline: 0; background: none; color: inherit; font: inherit; }
.root { display: flex; align-items: center; gap: 3px; height: 24px; padding-left: 3px; }
.tree { margin: 0; padding: 0; list-style: none; }
.tree li { display: flex; align-items: center; height: 24px; gap: 4px; }
.tree .twist { width: 21px; padding-left: 8px; box-sizing: border-box; }
.tree .twist .right { display: block; }
.off { color: #858585; }
.rollback { height: 3px; margin-right: 3px; background: #3a86cc; border-bottom: 1px solid #154a94; }
.flyout {
  position: absolute;
  left: 339px;
  top: 364px;
  display: flex;
  align-items: center;
  width: 11px;
  height: 49px;
  background: #484848;
}

.view { position: relative; flex: 1; }
.model { position: absolute; left: 0; top: 0; width: 741px; height: 648px; }
.engrave { font: italic 400 29px "DejaVu Sans", sans-serif; fill: #12756d; stroke: #06201e; stroke-width: 1px; }
.floatbar, .menu {
  position: absolute;
  left: 94px;
  box-sizing: border-box;
  width: 247px;
  background: #484848;
  border: 1px solid #777;
  box-shadow: 3px 3px 3px #888;
}
.floatbar { top: 33px; height: 68px; padding: 3px; }
.frow { display: flex; align-items: center; height: 30px; }
.cell { display: flex; align-items: center; justify-content: center; flex: none; width: 30px; height: 30px; }
.cell.pressed { background: #222; }
.frow .down { margin: 0 3px 0 4px; }
.frow .split { height: 28px; width: 42px; }
.frow .split .face { width: 28px; }
.frow .split .down { margin: 0; }
.callout { position: absolute; left: 86px; top: 63px; box-sizing: border-box; width: 143px; height: 40px; border: 4px solid #df5450; }
.menu { top: 111px; padding-top: 3px; }
.item { display: flex; align-items: center; width: 100%; height: 25px; gap: 18px; padding: 0 14px 0 7px; text-align: left; }
.item.tall { height: 26px; }
.item span { flex: 1; }
.item u { text-underline-offset: 2px; }
.menu hr { height: 1px; margin: 1px 0 0 38px; border: 0; background: #999; }
.item.tall + .item.tall { height: 27px; }
.expand { display: flex; align-items: center; justify-content: center; width: 100%; height: 30px; }
.expand svg { width: 8px; height: 10px; }
</style>
